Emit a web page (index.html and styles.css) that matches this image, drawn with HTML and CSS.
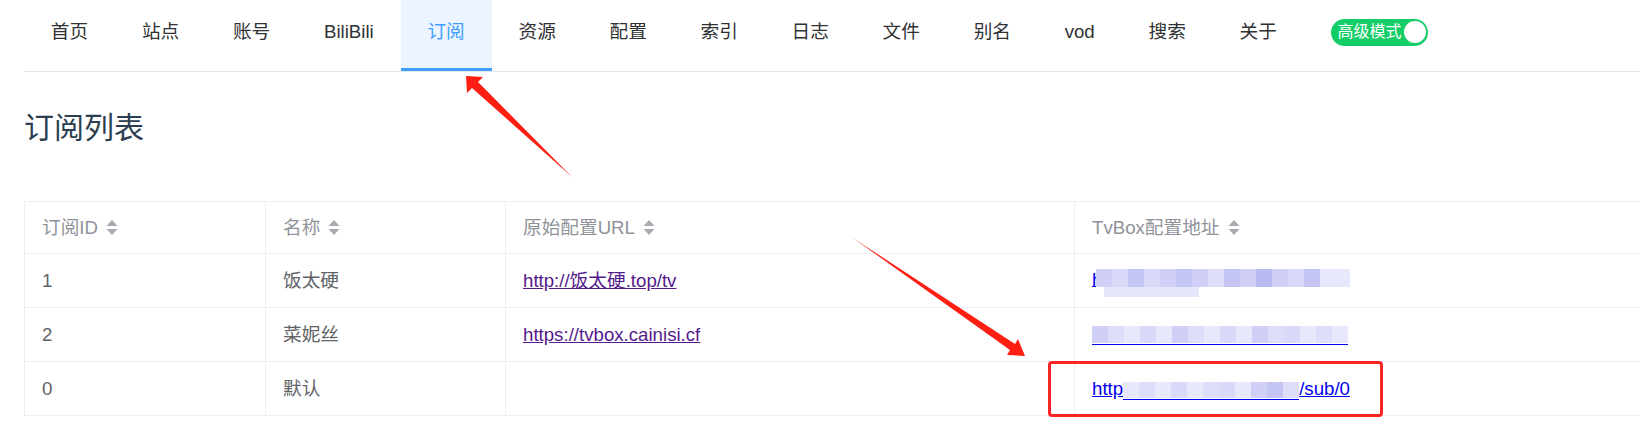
FILE: index.html
```html
<!DOCTYPE html>
<html lang="zh-CN">
<head>
<meta charset="utf-8">
<title>订阅列表</title>
<link rel="stylesheet" href="styles.css">
</head>
<body>
<div class="page">
  <nav class="menu">
    <a class="item">首页</a>
    <a class="item">站点</a>
    <a class="item">账号</a>
    <a class="item">BiliBili</a>
    <a class="item active">订阅</a>
    <a class="item">资源</a>
    <a class="item">配置</a>
    <a class="item">索引</a>
    <a class="item">日志</a>
    <a class="item">文件</a>
    <a class="item">别名</a>
    <a class="item">vod</a>
    <a class="item">搜索</a>
    <a class="item">关于</a>
    <div class="item toggle-item">
      <span class="switch"><span class="switch-label">高级模式</span><span class="knob"></span></span>
    </div>
  </nav>

  <h2 class="title">订阅列表</h2>

  <div class="table-wrap">
    <table class="subs">
      <colgroup><col class="c1"><col class="c2"><col class="c3"><col class="c4"></colgroup>
      <thead>
        <tr>
          <th><span class="th">订阅ID<svg class="sort" viewBox="0 0 12 15"><polygon points="6,0 11.5,6 0.5,6"/><polygon points="0.5,9 11.5,9 6,15"/></svg></span></th>
          <th><span class="th">名称<svg class="sort" viewBox="0 0 12 15"><polygon points="6,0 11.5,6 0.5,6"/><polygon points="0.5,9 11.5,9 6,15"/></svg></span></th>
          <th><span class="th">原始配置URL<svg class="sort" viewBox="0 0 12 15"><polygon points="6,0 11.5,6 0.5,6"/><polygon points="0.5,9 11.5,9 6,15"/></svg></span></th>
          <th><span class="th">TvBox配置地址<svg class="sort" viewBox="0 0 12 15"><polygon points="6,0 11.5,6 0.5,6"/><polygon points="0.5,9 11.5,9 6,15"/></svg></span></th>
        </tr>
      </thead>
      <tbody>
        <tr>
          <td>1</td>
          <td>饭太硬</td>
          <td><a class="visited">http://饭太硬.top/tv</a></td>
          <td><a class="link">h</a><span class="mosaic m-row1"><span class="m-top"><i class="s2"></i><i class="s3"></i><i class="s1"></i><i class="s3"></i><i class="s2"></i><i class="s1"></i><i class="s2"></i><i class="s4"></i><i class="s1"></i><i class="s2"></i><i class="s5"></i><i class="s2"></i><i class="s3"></i><i class="s1"></i><i class="s6"></i></span><span class="m-bottom"></span></span></td>
        </tr>
        <tr>
          <td>2</td>
          <td>菜妮丝</td>
          <td><a class="visited">https://tvbox.cainisi.cf</a></td>
          <td><span class="mosaic m-line m-row2"><i class="s2"></i><i class="s4"></i><i class="s6"></i><i class="s3"></i><i class="s6"></i><i class="s2"></i><i class="s4"></i><i class="s6"></i><i class="s3"></i><i class="s6"></i><i class="s2"></i><i class="s4"></i><i class="s3"></i><i class="s6"></i><i class="s4"></i><i class="s6"></i></span></td>
        </tr>
        <tr>
          <td>0</td>
          <td>默认</td>
          <td></td>
          <td><a class="link">http</a><span class="mosaic m-line m-row3"><i class="s6"></i><i class="s4"></i><i class="s6"></i><i class="s3"></i><i class="s6"></i><i class="s4"></i><i class="s3"></i><i class="s6"></i><i class="s2"></i><i class="s1"></i><i class="s4"></i></span><a class="link">/sub/0</a></td>
        </tr>
      </tbody>
    </table>
  </div>
</div>

<div class="red-box"></div>
<svg class="arrows" viewBox="0 0 1640 433" width="1640" height="433">
  <polygon class="arrow" points="466,76 483,77 478,82 572,177 472,88 467,93"/>
  <polygon class="arrow" points="853,238 1015,344 1018,339 1025,356 1007,355 1010,350"/>
</svg>
</body>
</html>
```

FILE: styles.css
```css
html, body {
  margin: 0;
  padding: 0;
}
body {
  width: 1640px;
  height: 433px;
  overflow: hidden;
  position: relative;
  background: #fff;
  font-family: "Liberation Sans", "Noto Sans CJK SC", sans-serif;
  color: #2c3e50;
}
.page {
  padding-left: 24px;
}

/* ---------- top menu ---------- */
.menu {
  display: flex;
  height: 71px;
  border-bottom: 1px solid #e4e7ed;
}
.item {
  box-sizing: border-box;
  height: 71px;
  padding: 0 26.87px 4px;
  display: flex;
  align-items: center;
  font-size: 18.67px;
  line-height: 24px;
  color: #303133;
  border-bottom: 3px solid transparent;
  white-space: nowrap;
  cursor: pointer;
}
.item.active {
  color: #409eff;
  background: #ecf5ff;
  border-bottom-color: #409eff;
}
.switch {
  box-sizing: border-box;
  width: 97px;
  height: 27px;
  border-radius: 14px;
  background: #13ce66;
  display: flex;
  align-items: center;
  justify-content: space-between;
  padding: 0 2px 0 7px;
}
.switch-label {
  color: #fff;
  font-size: 16px;
  line-height: 20px;
}
.knob {
  width: 22px;
  height: 22px;
  border-radius: 50%;
  background: #fff;
}

/* ---------- title ---------- */
.title {
  margin: 36px 0 53px;
  font-size: 30px;
  line-height: 40px;
  font-weight: 400;
  color: #2c3e50;
}

/* ---------- table ---------- */
.table-wrap {
  overflow: hidden;
}
.subs {
  table-layout: fixed;
  width: 1700px;
  border-collapse: collapse;
  font-size: 18.67px;
  line-height: 26px;
  color: #606266;
}
.c1 { width: 241px; }
.c2 { width: 240px; }
.c3 { width: 569px; }
.c4 { width: 650px; }
.subs th,
.subs td {
  border: 1px solid #ebeef5;
  padding: 0 0 0 17px;
  text-align: left;
  white-space: nowrap;
}
.subs th {
  height: 51px;
  font-weight: 400;
  color: #909399;
}
.subs td {
  height: 53px;
}
.th {
  display: inline-flex;
  align-items: center;
}
.sort {
  width: 12px;
  height: 15px;
  margin-left: 8px;
  fill: #a8abb2;
}
.visited {
  color: #551a8b;
  text-decoration: underline;
  cursor: pointer;
}
.link {
  color: #0000ee;
  text-decoration: underline;
  cursor: pointer;
}

/* blurred (pixelated) part of the address */
.mosaic {
  display: inline-flex;
  vertical-align: middle;
}
.mosaic i {
  display: block;
  width: 16px;
  height: 18px;
}
.m-row1 {
  flex-direction: column;
  margin-left: -6px;
  margin-top: 4px;
}
.m-top {
  display: flex;
}
.m-top i:last-child { width: 30px; }
.m-bottom {
  display: block;
  width: 95px;
  height: 10px;
  margin-left: 8px;
  background: #e6e6fb;
}
.m-line {
  border-bottom: 1px solid #0000ee;
  padding-bottom: 1px;
}
.m-row2 { width: 256px; }
.m-row2 i { height: 17px; }
.m-row3 { height: 16px; margin-top: 3px; }
.m-row3 i { height: 16px; }
.s1 { background: #c5c5f4; }
.s2 { background: #cfcff7; }
.s3 { background: #d9d9f9; }
.s4 { background: #dedefa; }
.s5 { background: #b9b9f1; }
.s6 { background: #e8e8fc; }

/* ---------- annotations ---------- */
.red-box {
  position: absolute;
  left: 1048px;
  top: 361px;
  width: 335px;
  height: 56px;
  box-sizing: border-box;
  border: 3px solid #ff2424;
  border-radius: 4px;
}
.arrows {
  position: absolute;
  left: 0;
  top: 0;
  pointer-events: none;
}
.arrow {
  fill: #ff1f12;
}
```
